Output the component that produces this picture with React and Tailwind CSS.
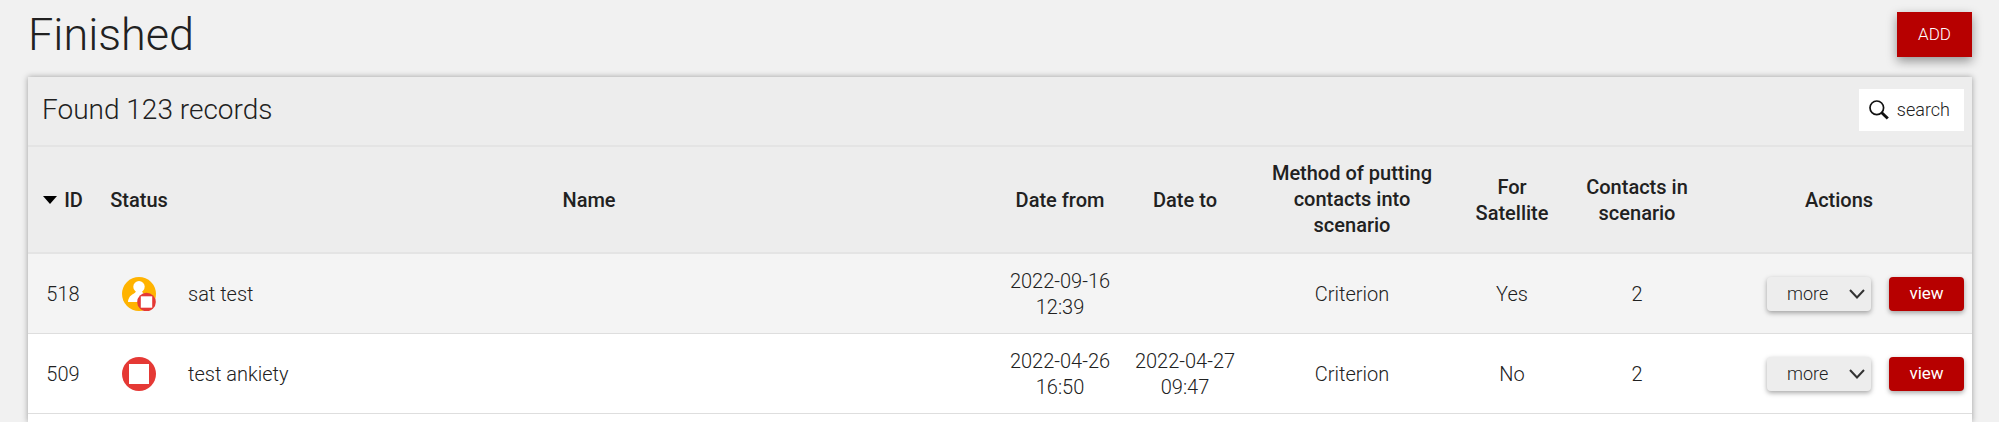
import React from 'react';

const records = [
  {
    id: 518,
    status: 'satellite',
    name: 'sat test',
    from: ['2022-09-16', '12:39'],
    to: null,
    method: 'Criterion',
    satellite: 'Yes',
    contacts: 2,
  },
  {
    id: 509,
    status: 'stopped',
    name: 'test ankiety',
    from: ['2022-04-26', '16:50'],
    to: ['2022-04-27', '09:47'],
    method: 'Criterion',
    satellite: 'No',
    contacts: 2,
  },
];

function StatusIcon({ status }) {
  if (status === 'satellite') {
    return (
      <svg className="w-[34px] h-[34px] mx-auto" viewBox="0 0 34 34" role="img" aria-label="Satellite, finished">
        <circle cx="17" cy="17" r="17" fill="#ffb300" />
        <circle cx="17" cy="9.8" r="5.7" fill="#fff" />
        <path d="M14 13h6c0 2.200.8 3.200 2.700 4.200L17 25H6c.3-4.600 3-7 5.600-8.200C13.300 16 14 14.800 14 13z" fill="#fff" />
        <circle cx="24.500" cy="25" r="9.300" fill="#e53935" />
        <rect x="18.800" y="19.300" width="11.400" height="11.400" fill="#fff" />
      </svg>
    );
  }

  return (
    <svg className="w-[34px] h-[34px] mx-auto" viewBox="0 0 34 34" role="img" aria-label="Finished">
      <circle cx="17" cy="17" r="17" fill="#e53935" />
      <rect x="7" y="7" width="20" height="20" fill="#fff" />
    </svg>
  );
}

function DateCell({ value }) {
  return (
    <td className="pt-[14px] pb-[13px]">
      {value && (
        <>
          {value[0]}
          <br />
          {value[1]}
        </>
      )}
    </td>
  );
}

function MoreSelect({ id }) {
  return (
    <div className="relative">
      <select
        aria-label={`More actions for ${id}`}
        className="block appearance-none w-[104px] h-[34px] pl-5 pr-8 rounded bg-[#ededed] text-lg leading-none font-light text-[#212121] shadow-[0_2px_5px_rgba(0,0,0,0.35)]"
      >
        <option>more</option>
      </select>
      <svg
        className="absolute right-[6px] top-[12px] w-4 h-[10px] pointer-events-none"
        viewBox="0 0 16 10"
        fill="none"
        stroke="#333"
        strokeWidth="2"
      >
        <path d="M1 1l7 7.500L15 1" />
      </svg>
    </div>
  );
}

export default function App() {
  return (
    <div className="min-h-screen flex flex-col bg-[#f1f1f1] pl-7 pr-[27px] font-['Roboto',sans-serif] text-[#212121]">
      {/* Page title */}
      <header className="flex items-center justify-between pt-3 pb-5">
        <h1 className="text-[45px] leading-[44px] font-light">Finished</h1>
        <button className="w-[75px] h-[45px] bg-[#b70000] text-white text-[17px] font-light shadow-[0_4px_10px_rgba(0,0,0,0.4)]">
          ADD
        </button>
      </header>

      <main className="flex-1 bg-white shadow-[0_0_6px_rgba(0,0,0,0.35)]">
        <div className="flex items-center justify-between pt-3 pb-[14px] pl-[14px] pr-2 bg-[#ededed]">
          <h2 className="text-[28px] leading-8 font-light">Found 123 records</h2>
          <button className="flex items-center gap-2 h-[42px] pl-[10px] pr-[14px] bg-white text-lg font-light">
            <svg className="w-5 h-5" viewBox="0 0 20 20" fill="none" stroke="#111">
              <circle cx="7.800" cy="7.800" r="6.800" strokeWidth="1.700" />
              <path d="M12.500 12.500l6.300 6" strokeWidth="3" />
            </svg>
            search
          </button>
        </div>

        {/* Records */}
        <table className="w-full table-fixed border-collapse text-xl leading-[26px] text-center">
          <colgroup>
            <col className="w-[70px]" />
            <col className="w-[82px]" />
            <col />
            <col className="w-[124px]" />
            <col className="w-[126px]" />
            <col className="w-[208px]" />
            <col className="w-[112px]" />
            <col className="w-[138px]" />
            <col className="w-[266px]" />
          </colgroup>
          <thead>
            <tr className="bg-[#ededed] border-y-2 border-[#e4e4e4]">
              <th className="font-medium">
                <span className="flex items-center justify-center gap-[7px]">
                  <svg className="w-[14px] h-2" viewBox="0 0 14 8">
                    <path d="M0 0h14L7 8z" fill="#000" />
                  </svg>
                  ID
                </span>
              </th>
              <th className="font-medium">Status</th>
              <th className="font-medium">Name</th>
              <th className="font-medium">Date from</th>
              <th className="font-medium">Date to</th>
              <th className="font-medium px-5 pt-[13px] pb-[14px]">Method of putting contacts into scenario</th>
              <th className="font-medium px-2">For Satellite</th>
              <th className="font-medium px-2">Contacts in scenario</th>
              <th className="font-medium">Actions</th>
            </tr>
          </thead>
          <tbody className="font-light">
            {records.map((r) => (
              <tr key={r.id} className="bg-white odd:bg-[#f4f4f4] border-b border-[#dedede]">
                <td>{r.id}</td>
                <td>
                  <StatusIcon status={r.status} />
                </td>
                <td className="text-left px-2">{r.name}</td>
                <DateCell value={r.from} />
                <DateCell value={r.to} />
                <td>{r.method}</td>
                <td>{r.satellite}</td>
                <td>{r.contacts}</td>
                <td className="pr-2">
                  <div className="flex justify-end gap-[18px]">
                    <MoreSelect id={r.id} />
                    <button className="w-[75px] h-[34px] rounded bg-[#b70000] text-white text-[17px] leading-none font-normal shadow-[0_2px_5px_rgba(0,0,0,0.35)]">
                      view
                    </button>
                  </div>
                </td>
              </tr>
            ))}
          </tbody>
        </table>
      </main>
    </div>
  );
}
